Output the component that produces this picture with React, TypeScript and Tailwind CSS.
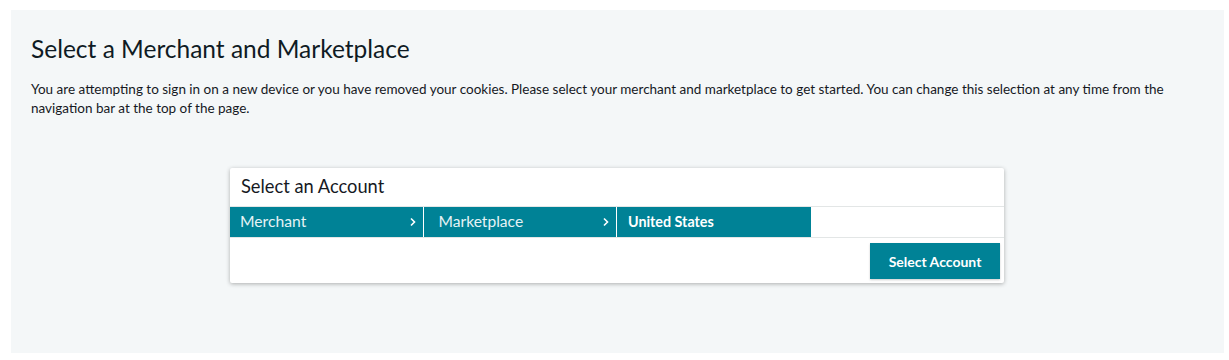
import React from "react";

const Chevron = () => (
  <svg width="8" height="10" viewBox="0 0 8 10" className="shrink-0">
    <path d="M2 1.5 L5.5 5 L2 8.5" fill="none" stroke="#ffffff" strokeWidth="1.6" />
  </svg>
);

export default function App() {
  return (
    <div className="min-h-[360px] bg-white pt-[10px] pl-[11px]" style={{ fontFamily: "Lato, 'Open Sans', sans-serif" }}>
      <div className="w-[1213px] h-[343px] bg-[#f4f7f8] pl-[20px] pr-[20px] pt-[24px]">
        <h1 className="text-[24.5px] leading-[30px] text-[#0f1b24] font-normal">Select a Merchant and Marketplace</h1>
        <p className="mt-[16px] text-[13.5px] leading-[19px] text-[#16191f]">
          You are attempting to sign in on a new device or you have removed your cookies. Please select your merchant and marketplace to get started. You can change this selection at any time from the navigation bar at the top of the page.
        </p>
        <div className="mt-[50px] flex justify-center pr-[1px]">
          <div className="w-[774px] bg-white rounded-[2px] shadow-[0_1px_4px_rgba(0,0,0,0.3)]">
            <div className="h-[39px] border-b border-[#e3e6e6] pl-[11px] flex items-center">
              <span className="text-[18.3px] text-[#16191f]">Select an Account</span>
            </div>
            <div className="grid grid-cols-4 h-[31px] border-b border-[#e3e6e6]">
              <div className="bg-[#008296] flex items-center justify-between pl-[10px] pr-[6px] border-r border-white">
                <span className="text-[15.7px] text-[#e6f3f5]">Merchant</span>
                <Chevron />
              </div>
              <div className="bg-[#008296] flex items-center justify-between pl-[15px] pr-[6px] border-r border-white">
                <span className="text-[15.6px] text-[#e6f3f5]">Marketplace</span>
                <Chevron />
              </div>
              <div className="bg-[#008296] flex items-center pl-[11px]">
                <span className="text-[14.3px] font-bold text-white">United States</span>
              </div>
              <div />
            </div>
            <div className="flex justify-end pt-[5px] pb-[4px] pr-[4px]">
              <button className="w-[130px] h-[36px] bg-[#008296] text-white text-[14px] font-bold shadow-[0_1px_2px_rgba(0,0,0,0.2)]">
                Select Account
              </button>
            </div>
          </div>
        </div>
      </div>
    </div>
  );
}
